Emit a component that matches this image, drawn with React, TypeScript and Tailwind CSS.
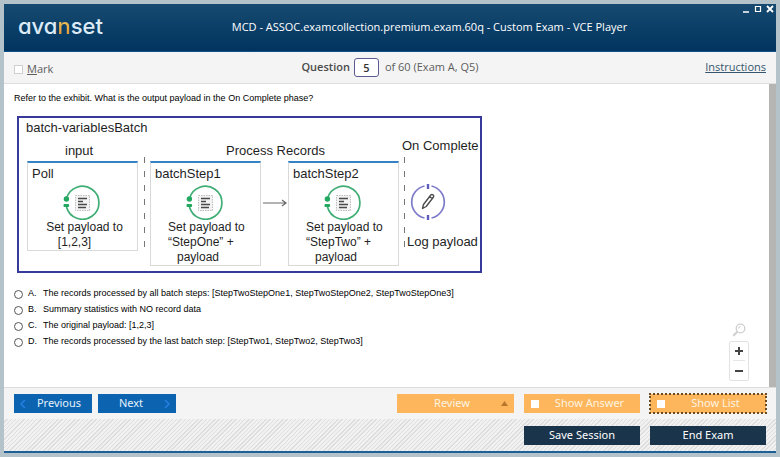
import React from "react";

const diagramFont = "font-['Liberation_Sans',Arial,sans-serif]";

function TransformIcon() {
  return (
    <svg className="mx-auto block h-9 w-10" viewBox="0 0 40 36" fill="none" aria-hidden="true">
      <path d="M3.500 14.500A16.500 16.500 0 1 1 3.500 23" stroke="#3fae74" strokeWidth="1.7" />
      <circle cx="3.400" cy="15" r="2.700" fill="#22a860" />
      <rect x="0.500" y="20" width="5.600" height="3" rx="1" fill="#22a860" />
      <rect x="12.500" y="11.500" width="14" height="15" fill="#f3f3f3" stroke="#bdbdbd" strokeDasharray="1.5 1" />
      <path d="M15 14.500h9M15 17.500h5M15 20.500h9M15 23.500h8" stroke="#4a4a4a" strokeWidth="1.5" />
    </svg>
  );
}

function LoggerIcon() {
  return (
    <svg className="block h-9 w-9" viewBox="0 0 36 36" fill="none" aria-hidden="true">
      <path d="M21.5 2A16.4 16.4 0 0 1 21.5 34M14.5 34A16.4 16.4 0 0 1 14.5 2" stroke="#7d7bc9" strokeWidth="1.7" />
      <path d="M18 0v5M18 31v5" stroke="#5f5cc0" strokeWidth="2.4" />
      <path d="M12.5 24.500l1-4 7.300-9.500q1-1 2.200-.2t.5 2.200L16.200 22.500zM19.500 12.500l2.700 2" stroke="#4d4d4d" strokeWidth="1.4" strokeLinejoin="round" />
    </svg>
  );
}

type StepProps = { title: string; place: string; first: string; second: string; third?: string; wide?: boolean };

function Step({ title, place, first, second, third, wide }: StepProps) {
  return (
    <div className={`absolute top-[43px] w-[111px] border border-t-2 border-[#d9d9d9] border-t-[#3583c4] ${place}`}>
      <h3 className="pl-1 text-[13px] leading-[21px]">{title}</h3>
      <TransformIcon />
      <p className={wide ? "pl-1 text-center text-[12px] leading-[15px]" : "pl-[17px] text-[12px] leading-[15px]"}>
        {first}
      </p>
      <p className={wide ? "pr-4 text-center text-[12px] leading-[15px]" : "pl-[17px] text-[12px] leading-[15px]"}>
        {second}
      </p>
      {third && <p className="pl-[26px] text-[12px] leading-[15px]">{third}</p>}
    </div>
  );
}

function Divider({ place }: { place: string }) {
  return (
    <svg className={`absolute top-[38px] h-[98px] w-px ${place}`} viewBox="0 0 1 98" aria-hidden="true">
      <path d="M.5 1v97" stroke="#777" strokeWidth="1" strokeDasharray="6 8" />
    </svg>
  );
}

function Exhibit() {
  return (
    <figure
      aria-label="Batch job exhibit"
      className={`relative mt-3 ml-[3px] h-[157px] w-[465px] border-2 border-[#37399b] whitespace-nowrap text-[#1f1f1f] ${diagramFont}`}
    >
      <figcaption className="pl-[7px] text-[13px] leading-5">batch-variablesBatch</figcaption>
      <span className="absolute top-[25px] left-[46px] text-[13px] leading-4">input</span>
      <span className="absolute top-[25px] left-[207px] text-[13px] leading-4">Process Records</span>
      <span className="absolute top-[20px] left-[383px] text-[13px] leading-4">On Complete</span>
      <Step title="Poll" place="left-[8px]" first="Set payload to" second="[1,2,3]" wide />
      <Divider place="left-[125px]" />
      <Step title="batchStep1" place="left-[131px]" first="Set payload to" second="“StepOne” +" third="payload" />
      <svg className="absolute top-[80px] left-[244px] h-[10px] w-6" viewBox="0 0 24 10" fill="none" aria-hidden="true">
        <path d="M0 5h23M19 2l4 3-4 3" stroke="#6b6b6b" strokeWidth="1.2" />
      </svg>
      <Step title="batchStep2" place="left-[269px]" first="Set payload to" second="“StepTwo” +" third="payload" />
      <Divider place="left-[385px]" />
      <div className="absolute top-[66px] left-[391px]">
        <LoggerIcon />
      </div>
      <span className="absolute top-[116px] left-[388px] text-[13px] leading-4">Log payload</span>
    </figure>
  );
}

const answers = [
  ["A", "The records processed by all batch steps: [StepTwoStepOne1, StepTwoStepOne2, StepTwoStepOne3]"],
  ["B", "Summary statistics with NO record data"],
  ["C", "The original payload: [1,2,3]"],
  ["D", "The records processed by the last batch step: [StepTwo1, StepTwo2, StepTwo3]"],
];

function Toggle({ text, focused }: { text: string; focused?: boolean }) {
  return (
    <label
      className={`flex h-[19px] w-[116px] items-center bg-[#fdb65c] pl-[7px] text-[#fff3e0] ${
        focused ? "outline-2 -outline-offset-1 outline-dotted outline-[#6b4a22]" : ""
      }`}
    >
      <input type="checkbox" className="size-2 shrink-0 appearance-none bg-white checked:bg-[#1a344b]" />
      <span className="flex-1 text-center">{text}</span>
    </label>
  );
}

export default function App() {
  return (
    <div className="flex min-h-screen flex-col bg-[#b4c3c9] p-1 font-['Noto_Sans',sans-serif] text-[11px]">
      <header className="relative flex h-12 items-center border-b border-[#0f4f8a] bg-linear-to-b from-[#174a70] to-[#02345f] pr-5 pl-[14px] text-white">
        <div className="-mt-1 font-['Inter',sans-serif] text-[22px] leading-8 font-medium text-[#dcebf7] [font-feature-settings:'cv11']">
          ava<span className="bg-linear-to-b from-[#f3d568] to-[#e08a2c] bg-clip-text text-transparent">n</span>set
        </div>
        <h1 className="flex-1 text-center font-['Open_Sans',sans-serif] text-[11px] font-medium">
          MCD - ASSOC.examcollection.premium.exam.60q - Custom Exam - VCE Player
        </h1>
        <div className="absolute top-0 right-0 flex">
          <button aria-label="Minimize" className="size-3">
            <svg viewBox="0 0 12 12" fill="none" stroke="#fff"><path d="M3 8h6" strokeWidth="1.5" /></svg>
          </button>
          <button aria-label="Maximize" className="size-3">
            <svg viewBox="0 0 12 12" fill="none" stroke="#fff"><path d="M3.500 2.500h5v5h-5z" strokeWidth="1.2" /></svg>
          </button>
          <button aria-label="Close" className="size-3">
            <svg viewBox="0 0 12 12" fill="none" stroke="#fff"><path d="M3 2l6 6M9 2l-6 6" strokeWidth="1.8" /></svg>
          </button>
        </div>
      </header>

      <div className="grid h-8 grid-cols-[1fr_auto_1fr] items-center border-b border-[#dedede] bg-[#f4f4f4] px-[10px] font-['Open_Sans',sans-serif] text-[11px] text-[#5d5d5d]">
        <label className="flex items-center gap-1 pt-[3px]">
          <input type="checkbox" className="size-[9px] appearance-none border border-[#cfcfcf] bg-white checked:bg-[#0c64b0]" />
          <span><span className="underline">M</span>ark</span>
        </label>
        <div className="flex items-center">
          <label htmlFor="question" className="font-semibold text-[#4a4a4a]">Question</label>
          <input
            id="question"
            defaultValue="5"
            className="mr-[6px] ml-1 h-[19px] w-[25px] rounded-[3px] border border-[#5b5a93] bg-white text-center font-semibold text-[#333]"
          />
          <span>of 60 (Exam A, Q5)</span>
        </div>
        <a href="#instructions" className="justify-self-end text-[#35566e] underline">Instructions</a>
      </div>

      <main className="relative flex flex-1 bg-white">
        <div className={`flex-1 pt-2 pb-4 pl-[10px] text-[9px] text-black ${diagramFont}`}>
          <p className="leading-3">Refer to the exhibit. What is the output payload in the On Complete phase?</p>
          <Exhibit />
          <div role="radiogroup" aria-label="Answers" className="mt-[13px]">
            {answers.map(([letter, text]) => (
              <label key={letter} className="flex h-4 items-center">
                <input
                  type="radio"
                  name="answer"
                  className="size-[9px] shrink-0 appearance-none rounded-full border border-[#555] bg-white checked:bg-[#333]"
                />
                <span className="ml-[5px] w-[15px]">{letter}.</span>
                <span>{text}</span>
              </label>
            ))}
          </div>
        </div>
        <div className="absolute right-[27px] bottom-[6px] flex w-5 flex-col items-center">
          <svg className="size-[14px]" viewBox="0 0 14 14" fill="none" stroke="#cfcfcf" aria-hidden="true">
            <circle cx="8.500" cy="5.500" r="4.300" strokeWidth="1.3" />
            <path d="M5.300 8.700L1.300 12.700" strokeWidth="2" />
            <path d="M6.500 5.500a2 2 0 0 1 2-2" />
          </svg>
          <div className="mt-1 flex w-full flex-col rounded-[2px] border border-[#e2e2e2] bg-white px-[3px]">
            <button aria-label="Zoom in" className="flex h-[19px] items-center justify-center border-b border-[#e6e6e6]">
              <svg className="size-2" viewBox="0 0 8 8" stroke="#444" strokeWidth="2"><path d="M0 4h8M4 0v8" /></svg>
            </button>
            <button aria-label="Zoom out" className="flex h-[19px] items-center justify-center">
              <svg className="size-2" viewBox="0 0 8 8" stroke="#444" strokeWidth="2"><path d="M0 4h8" /></svg>
            </button>
          </div>
        </div>
        <div className="w-[7px] bg-[#b5b5b3]" />
      </main>

      <div className="flex h-8 items-center gap-[6px] border-t border-[#dcdcdc] bg-[#f4f4f4] px-[10px]">
        <button className="flex h-[19px] w-[78px] items-center bg-[#0c64b0] px-[6px] text-[#e6f1fb]">
          <svg className="h-2 w-[6px]" viewBox="0 0 6 8" fill="none" stroke="#2580e4" strokeWidth="1.500" aria-hidden="true"><path d="M5 0L1 4l4 4" /></svg>
          <span className="flex-1 pl-[6px] text-center">Previous</span>
        </button>
        <button className="flex h-[19px] w-[78px] items-center bg-[#0c64b0] px-[6px] text-[#e6f1fb]">
          <span className="flex-1 pr-[6px] text-center">Next</span>
          <svg className="h-2 w-[6px]" viewBox="0 0 6 8" fill="none" stroke="#2580e4" strokeWidth="1.500" aria-hidden="true"><path d="M1 0l4 4-4 4" /></svg>
        </button>
        <div className="ml-auto flex gap-[10px]">
          <button className="flex h-[19px] w-[117px] items-center bg-[#fdb65c] px-[6px] text-[#fff3e0]">
            <span className="flex-1 text-center">Review</span>
            <svg className="h-[5px] w-[7px]" viewBox="0 0 7 5" fill="#b8772d" aria-hidden="true"><path d="M3.500 0L7 5H0z" /></svg>
          </button>
          <Toggle text="Show Answer" />
          <Toggle text="Show List" focused />
        </div>
      </div>

      <footer className="flex h-[34px] items-center justify-end gap-[10px] border-b-2 border-[#1d6098] bg-[repeating-linear-gradient(135deg,#f1f1f1_0px,#f1f1f1_2px,#dedede_2px,#dedede_3px)] px-[10px] text-white">
        <button className="h-[19px] w-[116px] bg-[#1a344b]">Save Session</button>
        <button className="h-[19px] w-[116px] bg-[#1a344b]">End Exam</button>
      </footer>
    </div>
  );
}
